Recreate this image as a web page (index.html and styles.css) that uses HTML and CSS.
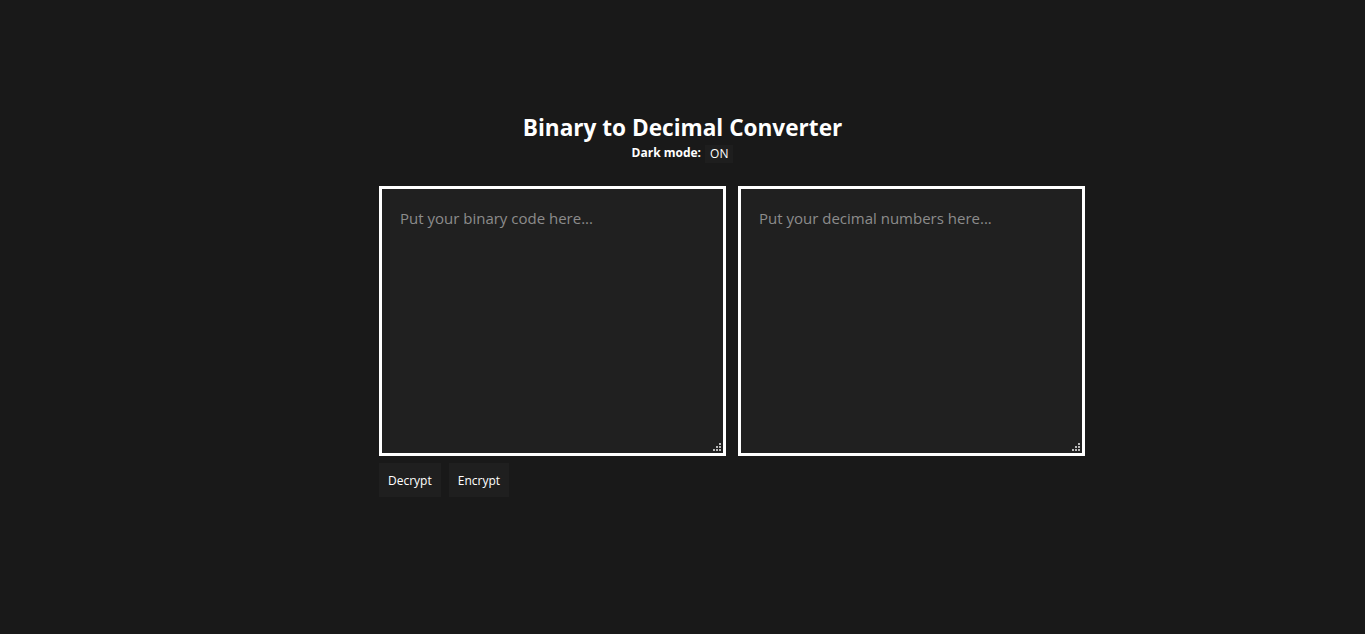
FILE: index.html
```html
<!DOCTYPE html>
<html lang="en">
<head>
<meta charset="utf-8">
<title>Binary to Decimal Converter</title>
<link rel="stylesheet" href="styles.css">
</head>
<body>
<main class="app">
  <h1 class="title">Binary to Decimal Converter</h1>
  <div class="mode">
    <span class="mode-label">Dark mode:</span>
    <button class="mode-toggle">ON</button>
  </div>
  <div class="boxes">
    <div class="box">
      <textarea class="field" placeholder="Put your binary code here..."></textarea>
      <svg class="grip" width="9" height="9" viewBox="0 0 9 9"><g fill="#b8b8b8"><rect x="6" y="0" width="2" height="2"/><rect x="3" y="3" width="2" height="2"/><rect x="6" y="3" width="2" height="2"/><rect x="0" y="6" width="2" height="2"/><rect x="3" y="6" width="2" height="2"/><rect x="6" y="6" width="2" height="2"/></g></svg>
    </div>
    <div class="box">
      <textarea class="field" placeholder="Put your decimal numbers here..."></textarea>
      <svg class="grip" width="9" height="9" viewBox="0 0 9 9"><g fill="#b8b8b8"><rect x="6" y="0" width="2" height="2"/><rect x="3" y="3" width="2" height="2"/><rect x="6" y="3" width="2" height="2"/><rect x="0" y="6" width="2" height="2"/><rect x="3" y="6" width="2" height="2"/><rect x="6" y="6" width="2" height="2"/></g></svg>
    </div>
  </div>
  <div class="actions">
    <button class="btn">Decrypt</button>
    <button class="btn">Encrypt</button>
  </div>
</main>
</body>
</html>
```
FILE: styles.css
```css
html, body {
  margin: 0;
  padding: 0;
  background: #191919;
  color: #ffffff;
  font-family: "Open Sans", "Noto Sans", sans-serif;
}
.app {
  width: 607px;
  margin: 0 auto;
  padding-top: 112px;
}
.title {
  margin: 0;
  text-align: center;
  font-size: 22.6px;
  font-weight: 700;
  line-height: 31px;
}
.mode {
  display: flex;
  justify-content: center;
  align-items: center;
  gap: 4px;
  height: 18px;
  margin-bottom: 25px;
}
.mode-label {
  font-size: 12px;
  font-weight: 700;
}
.mode-toggle {
  background: #1e1e1e;
  color: #ffffff;
  border: 0;
  padding: 0 5px;
  height: 18px;
  font-family: inherit;
  font-size: 12px;
  margin-top: 3px;
}
.boxes {
  display: flex;
  gap: 12px;
}
.box {
  position: relative;
  flex: 0 0 347px;
  height: 270px;
}
.field {
  box-sizing: border-box;
  width: 347px;
  height: 270px;
  display: block;
  margin: 0;
  resize: none;
  background: #202020;
  border: 3px solid #ffffff;
  color: #ffffff;
  padding: 19px 18px;
  font-family: inherit;
  font-size: 15px;
  outline: none;
}
.field::placeholder {
  color: #8c8c8c;
}
.grip {
  position: absolute;
  right: 4px;
  bottom: 4px;
}
.actions {
  display: flex;
  gap: 8px;
  margin-top: 7px;
}
.btn {
  background: #1f1f1f;
  color: #ffffff;
  border: 0;
  height: 34px;
  padding: 0 9px;
  font-family: inherit;
  font-size: 12px;
}
```
